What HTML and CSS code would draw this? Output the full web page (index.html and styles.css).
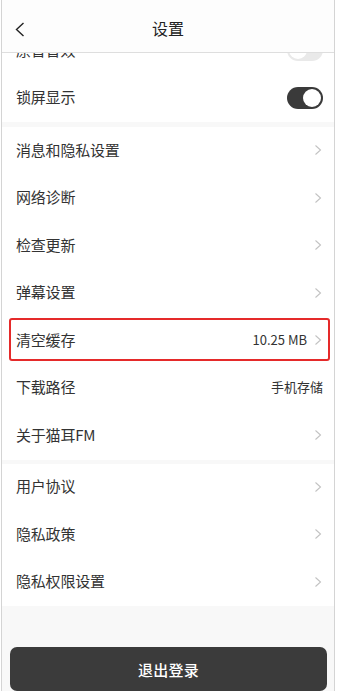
FILE: index.html
```html
<!DOCTYPE html>
<html lang="zh-CN">
<head>
<meta charset="utf-8">
<title>设置</title>
<link rel="stylesheet" href="styles.css">
</head>
<body>
<div class="screen">
  <header class="topbar">
    <span class="back">
      <svg width="10" height="15" viewBox="0 0 10 15"><polyline points="8.5,1 1.5,7.5 8.5,14" fill="none" stroke="#222" stroke-width="1.4"/></svg>
    </span>
    <h1 class="title">设置</h1>
  </header>
  <main class="scroll">
    <section class="group group-first">
      <div class="row"><span class="label">原音音效</span><span class="toggle"><span class="knob"></span></span></div>
      <div class="row"><span class="label">锁屏显示</span><span class="toggle on"><span class="knob"></span></span></div>
    </section>
    <section class="group">
      <div class="row"><span class="label">消息和隐私设置</span><span class="chev"><svg width="8" height="12" viewBox="0 0 8 12"><polyline points="1.5,1.5 6.5,6 1.5,10.5" fill="none" stroke="#c2c2c2" stroke-width="1.1"/></svg></span></div>
      <div class="row"><span class="label">网络诊断</span><span class="chev"><svg width="8" height="12" viewBox="0 0 8 12"><polyline points="1.5,1.5 6.5,6 1.5,10.5" fill="none" stroke="#c2c2c2" stroke-width="1.1"/></svg></span></div>
      <div class="row"><span class="label">检查更新</span><span class="chev"><svg width="8" height="12" viewBox="0 0 8 12"><polyline points="1.5,1.5 6.5,6 1.5,10.5" fill="none" stroke="#c2c2c2" stroke-width="1.1"/></svg></span></div>
      <div class="row"><span class="label">弹幕设置</span><span class="chev"><svg width="8" height="12" viewBox="0 0 8 12"><polyline points="1.5,1.5 6.5,6 1.5,10.5" fill="none" stroke="#c2c2c2" stroke-width="1.1"/></svg></span></div>
      <div class="row highlighted"><span class="label">清空缓存</span><span class="value">10.25 MB</span><span class="chev"><svg width="8" height="12" viewBox="0 0 8 12"><polyline points="1.5,1.5 6.5,6 1.5,10.5" fill="none" stroke="#c2c2c2" stroke-width="1.1"/></svg></span><span class="mark"></span></div>
      <div class="row"><span class="label">下载路径</span><span class="value plain">手机存储</span></div>
      <div class="row"><span class="label">关于猫耳FM</span><span class="chev"><svg width="8" height="12" viewBox="0 0 8 12"><polyline points="1.5,1.5 6.5,6 1.5,10.5" fill="none" stroke="#c2c2c2" stroke-width="1.1"/></svg></span></div>
    </section>
    <section class="group group-last">
      <div class="row"><span class="label">用户协议</span><span class="chev"><svg width="8" height="12" viewBox="0 0 8 12"><polyline points="1.5,1.5 6.5,6 1.5,10.5" fill="none" stroke="#c2c2c2" stroke-width="1.1"/></svg></span></div>
      <div class="row"><span class="label">隐私政策</span><span class="chev"><svg width="8" height="12" viewBox="0 0 8 12"><polyline points="1.5,1.5 6.5,6 1.5,10.5" fill="none" stroke="#c2c2c2" stroke-width="1.1"/></svg></span></div>
      <div class="row"><span class="label">隐私权限设置</span><span class="chev"><svg width="8" height="12" viewBox="0 0 8 12"><polyline points="1.5,1.5 6.5,6 1.5,10.5" fill="none" stroke="#c2c2c2" stroke-width="1.1"/></svg></span></div>
    </section>
    <div class="logout-wrap">
      <button class="logout">退出登录</button>
    </div>
  </main>
</div>
</body>
</html>
```
FILE: styles.css
```css
html, body {
  margin: 0;
  padding: 0;
  background: #ffffff;
  height: 691px;
  overflow: hidden;
}
body {
  font-family: "Noto Sans CJK SC", "Noto Sans", sans-serif;
  color: #333333;
}
.screen {
  margin: 0 2px 0 1px;
  border-left: 1px solid #d4d4d4;
  border-right: 1px solid #d4d4d4;
  height: 691px;
  background: #f8f8f8;
  display: flex;
  flex-direction: column;
}
.topbar {
  position: relative;
  z-index: 2;
  height: 52px;
  flex: 0 0 52px;
  background: #fdfdfd;
  border-bottom: 1px solid #dedede;
  display: flex;
  align-items: center;
  justify-content: center;
}
.back {
  position: absolute;
  left: 13px;
  top: 22px;
  width: 10px;
  height: 15px;
  display: flex;
}
.title {
  margin: 0;
  font-size: 16px;
  font-weight: normal;
  color: #222222;
  line-height: 1;
  padding-top: 3px;
}
.scroll {
  flex: 1;
  overflow: hidden;
  display: flex;
  flex-direction: column;
}
.group {
  background: #ffffff;
  display: flex;
  flex-direction: column;
  margin-top: 4px;
}
.group-first {
  margin-top: -26px;
  margin-bottom: 1px;
}
.row {
  position: relative;
  height: 47.5px;
  flex: 0 0 47.5px;
  box-sizing: border-box;
  display: flex;
  align-items: center;
  padding: 0 12px 3px 14px;
}
.label {
  flex: 1;
  font-size: 15px;
  color: #333333;
  letter-spacing: -0.2px;
}
.value {
  font-size: 13px;
  color: #333333;
  margin-right: 7px;
}
.value.plain {
  margin-right: -1px;
}
.chev {
  width: 8px;
  height: 12px;
  display: flex;
  margin-top: 2px;
}
.toggle {
  width: 36px;
  height: 22px;
  border-radius: 11px;
  background: #e9e9e9;
  position: relative;
  display: flex;
  align-items: center;
  padding: 0 2px;
  box-sizing: border-box;
  margin-right: -1px;
  margin-top: 2px;
}
.toggle .knob {
  width: 18px;
  height: 18px;
  border-radius: 50%;
  background: #ffffff;
}
.toggle.on {
  background: #3a3a3a;
  justify-content: flex-end;
}
.mark {
  position: absolute;
  left: 7px;
  right: 4px;
  top: 1px;
  bottom: 4px;
  border: 2.5px solid #e52a2a;
  border-radius: 3px;
  pointer-events: none;
}
.logout-wrap {
  padding: 41px 7px 0 8px;
}
.logout {
  width: 100%;
  height: 44px;
  border: none;
  border-radius: 7px;
  background: #3b3b3b;
  color: #ffffff;
  font-family: "Noto Sans CJK SC", "Noto Sans", sans-serif;
  font-size: 15px;
  font-weight: 500;
  letter-spacing: 0.3px;
  display: block;
}
```
